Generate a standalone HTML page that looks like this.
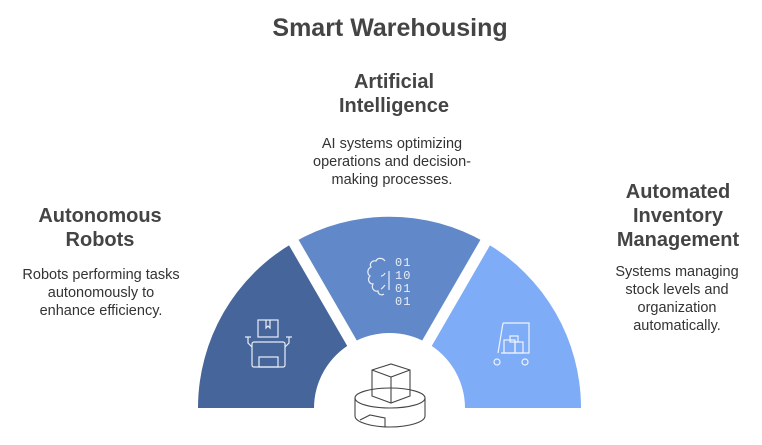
<!DOCTYPE html>
<html><head><style>
body{margin:0;width:762px;height:445px;background:#fff;font-family:"Liberation Sans",sans-serif;color:#444;position:relative;overflow:hidden}
.t{position:absolute;text-align:center;transform:translateX(-50%);white-space:nowrap}
.h{font-weight:bold;font-size:20px;line-height:24px;color:#444}
.d{font-size:14.5px;line-height:18px;color:#333}
</style></head><body>
<div class="t" style="left:390px;top:14px;font-size:25px;font-weight:bold;color:#444">Smart Warehousing</div>
<div class="t h" style="left:394px;top:70px">Artificial<br>Intelligence</div>
<div class="t d" style="left:392px;top:135px">AI systems optimizing<br>operations and decision-<br>making processes.</div>
<div class="t h" style="left:100px;top:204px">Autonomous<br>Robots</div>
<div class="t d" style="left:101px;top:266px">Robots performing tasks<br>autonomously to<br>enhance efficiency.</div>
<div class="t h" style="left:678px;top:180px">Automated<br>Inventory<br>Management</div>
<div class="t d" style="left:677px;top:263px">Systems managing<br>stock levels and<br>organization<br>automatically.</div>
<svg width="762" height="445" style="position:absolute;left:0;top:0">
<g>
<path d="M198 408 A191 191 0 0 1 293.5 242.6 L352 343 A75 75 0 0 0 314 408Z" fill="#46659a"/>
<path d="M293.5 242.6 A191 191 0 0 1 485.5 242.6 L427 343 A75 75 0 0 0 352 343Z" fill="#6189c9"/>
<path d="M485.5 242.6 A191 191 0 0 1 581 408 L465 408 A75 75 0 0 0 427 343Z" fill="#7eacf7"/>
<line x1="389.5" y1="408" x2="290" y2="236" stroke="#fff" stroke-width="11"/>
<line x1="389.5" y1="408" x2="489" y2="236" stroke="#fff" stroke-width="11"/>
</g>
<g fill="none" stroke="#e8eef8" stroke-width="1.2">
<rect x="258" y="320" width="20" height="17"/><path d="M266 320v8l2-2 2 2v-8"/>
<rect x="252" y="342" width="33" height="25" rx="2"/><rect x="259" y="357" width="19" height="10"/>
<path d="M252 347l-4-4v-6m-3 0h6M285 347l4-4v-6m-3 0h6"/>
</g>
<g fill="none" stroke="#e8eef8" stroke-width="1.2">
<path d="M385 261c-3-4-8-3-9 0-4-1-7 3-5 6-4 2-4 7-1 9-3 3-1 8 3 8-2 4 1 8 5 7 0 3 3 5 6 3"/>
<path d="M381 276c2 0 3-1 4-3M381 289c2-1 3-3 4-4"/>
<path d="M389 271v19"/>
</g>
<g fill="#e8eef8" font-family="Liberation Mono,monospace" font-size="12" letter-spacing="1">
<text x="395" y="266">01</text><text x="395" y="279">10</text><text x="395" y="292">01</text><text x="395" y="305">01</text>
</g>
<g fill="none" stroke="#eef4ff" stroke-width="1.2">
<path d="M503 323h26v30h-28M503 323l-5 30"/>
<rect x="504" y="340" width="11" height="13"/><rect x="510" y="336" width="8" height="6"/><rect x="515" y="342" width="8" height="11"/>
<circle cx="497" cy="362" r="3"/><circle cx="525" cy="362" r="3"/>
</g>
<g fill="none" stroke="#444" stroke-width="1.1">
<path d="M372 370l19-6 19 6v26l-19 7-19-7z M372 370l19 7 19-7 M391 377v26"/>
<ellipse cx="390" cy="398" rx="35" ry="10"/>
<path d="M355 398v18c0 6 16 11 35 11s35-5 35-11v-18"/>
<path d="M360 420l10-5 15 3v9"/>
</g>
</svg>
</body></html>
